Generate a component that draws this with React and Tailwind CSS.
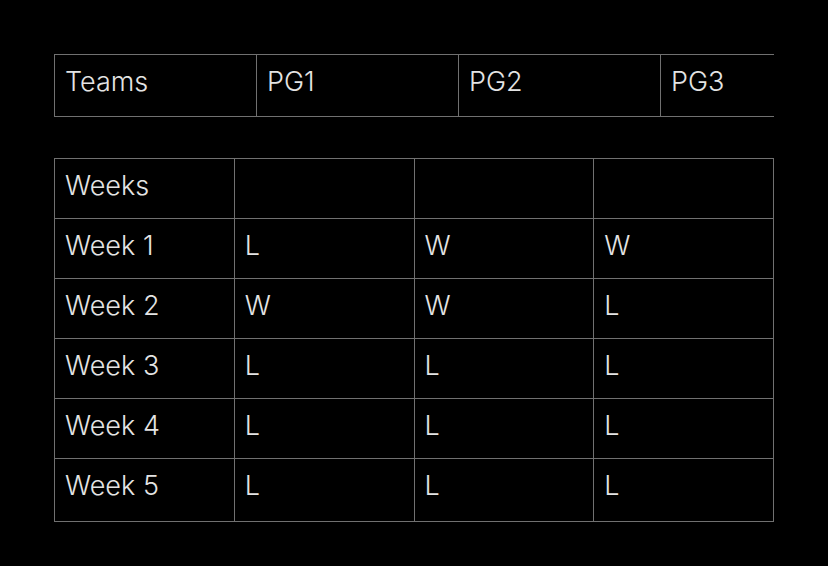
import React from 'react';

const teams = ['Teams', 'PG1', 'PG2', 'PG3'];

const weeks = [
    ['Weeks', '', '', ''],
    ['Week 1', 'L', 'W', 'W'],
    ['Week 2', 'W', 'W', 'L'],
    ['Week 3', 'L', 'L', 'L'],
    ['Week 4', 'L', 'L', 'L'],
    ['Week 5', 'L', 'L', 'L'],
];

const App = () => {
    return (
        <div className="w-full h-[566px] bg-black pt-[54px] pl-[54px] text-[#e4e4e4] font-['Inter',sans-serif] overflow-hidden">
            {/* Teams header (clipped on the right) */}
            <div className="w-[720px] overflow-hidden border-y border-l border-[#707070]">
                <div className="flex h-[61px]">
                    {teams.map((t) => (
                        <div key={t} className="w-[202px] shrink-0 border-r border-[#707070] pl-[10px] pt-[11px] text-[27px] leading-[32px] font-light">
                            {t}
                        </div>
                    ))}
                </div>
            </div>

            {/* Weekly results */}
            <div className="mt-[41px] w-[720px] border-t border-l border-[#707070]">
                {weeks.map((row, i) => (
                    <div key={i} className={`grid grid-cols-4 border-b border-[#707070] ${i === weeks.length - 1 ? 'h-[63px]' : 'h-[60px]'}`}>
                        {row.map((cell, j) => (
                            <div key={j} className="border-r border-[#707070] pl-[10px] pt-[11px] text-[27px] leading-[32px] font-light">
                                {cell}
                            </div>
                        ))}
                    </div>
                ))}
            </div>
        </div>
    );
};

export default App;
